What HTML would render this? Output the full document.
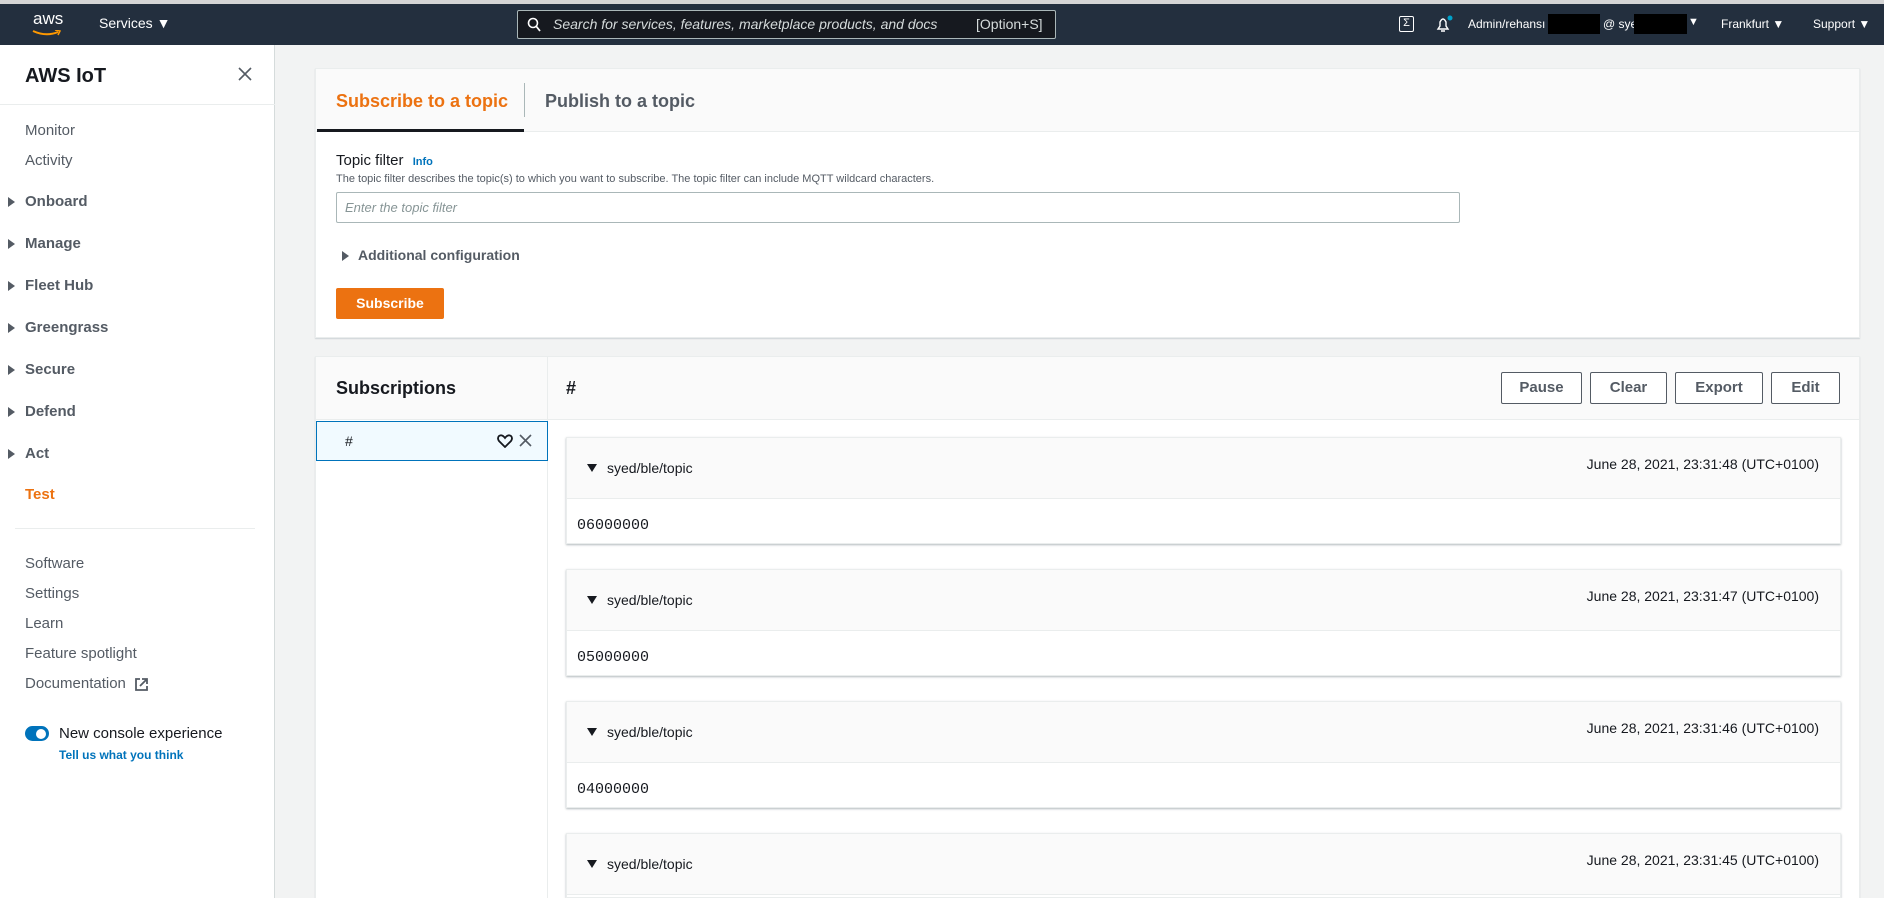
<!DOCTYPE html>
<html style="width:1884px;height:898px;overflow:hidden"><head><meta charset="utf-8"><style>
*{box-sizing:border-box;margin:0;padding:0}
body{width:1884px;height:898px;overflow:hidden;background:#f2f3f3;font-family:"Liberation Sans",sans-serif;color:#16191f;position:relative}
.abs{position:absolute}
.top{left:0;top:0;width:1884px;height:45px;background:#232f3e;border-top:4px solid #d5d5d5}
.tw{color:#fff;font-size:14px;position:absolute;white-space:nowrap}
.side{left:0;top:45px;width:275px;height:853px;background:#fff;border-right:1px solid #d5dbdb}
.si{position:absolute;left:25px;font-size:15px;color:#545b64;white-space:nowrap}
.sb{font-weight:bold;color:#545b64}
.tri{position:absolute;left:8px;width:0;height:0;border-top:5px solid transparent;border-bottom:5px solid transparent;border-left:7px solid #545b64}
.panel{background:#fff;border:1px solid #eaeded;box-shadow:0 1px 1px rgba(0,31,63,.15)}
.btn{position:absolute;top:372px;height:32px;border:1px solid #545b64;border-radius:2px;background:#fff;font-weight:bold;font-size:15px;color:#545b64;text-align:center;line-height:30px}
.card{position:absolute;left:566px;width:1275px;height:107px;background:#fff;border:1px solid #eaeded;box-shadow:0 1px 2px rgba(0,28,36,.3)}
.ch{height:61px;background:#fafafa;border-bottom:1px solid #eaeded;position:relative}
.ch .t{position:absolute;left:20px;top:22px;font-size:14px;color:#16191f}
.ch .t:before{content:"";display:inline-block;border-left:5px solid transparent;border-right:5px solid transparent;border-top:8px solid #16191f;margin-right:10px;vertical-align:1px}
.ch .d{position:absolute;right:21px;top:18px;font-size:14px}
.cb{position:absolute;left:10px;top:79px;font-family:"Liberation Mono",monospace;font-size:15px}
</style></head><body>
<div class="abs top">
  <div class="tw" style="left:33px;top:5px;font-size:17px">aws</div>
  <svg class="abs" style="left:32px;top:26px" width="30" height="8"><path d="M1 1 Q14 7 26 2" stroke="#f90" stroke-width="2" fill="none"/><path d="M23 0 L28 1 L26 5" stroke="#f90" stroke-width="1.5" fill="none"/></svg>
  <div class="tw" style="left:99px;top:11px">Services ▼</div>
  <div class="abs" style="left:517px;top:6px;width:539px;height:29px;border:1px solid #aab7b8;border-radius:2px;background:#16191f"></div>
  <svg class="abs" style="left:527px;top:13px" width="14" height="16"><circle cx="6" cy="6" r="4.5" stroke="#fff" stroke-width="1.6" fill="none"/><path d="M9 9 L13 14" stroke="#fff" stroke-width="1.8"/></svg>
  <div class="tw" style="left:553px;top:12px;font-style:italic;color:#d5dbdb">Search for services, features, marketplace products, and docs</div>
  <div class="tw" style="left:976px;top:12px;color:#d5dbdb">[Option+S]</div>
  <div class="abs" style="left:1399px;top:12px;width:15px;height:16px;border:1.5px solid #fff;border-radius:2px;color:#fff;font-size:11px;line-height:13px;text-align:center">Σ</div>
  <svg class="abs" style="left:1434px;top:10px" width="20" height="20"><path d="M4 15 L6 12 L6 8 Q9 2 12 8 L12 12 L14 15 Z M7 17 L11 17" stroke="#fff" stroke-width="1.4" fill="none"/><circle cx="16" cy="4" r="2.5" fill="#00a1c9"/></svg>
  <div class="tw" style="left:1468px;top:13px;font-size:12px">Admin/rehansı</div>
  <div class="abs" style="left:1548px;top:10px;width:52px;height:20px;background:#000"></div>
  <div class="tw" style="left:1603px;top:13px;font-size:12px">@ sye</div>
  <div class="abs" style="left:1634px;top:10px;width:53px;height:20px;background:#000"></div>
  <div class="tw" style="left:1688px;top:12px;font-size:11px">▼</div>
  <div class="tw" style="left:1721px;top:13px;font-size:12px">Frankfurt ▼</div>
  <div class="tw" style="left:1813px;top:13px;font-size:12px">Support ▼</div>
</div>
<div class="abs side">
  <div class="abs" style="left:25px;top:20px;font-size:20px;font-weight:bold">AWS IoT</div>
  <svg class="abs" style="left:238px;top:22px" width="14" height="14"><path d="M1 1L13 13M13 1L1 13" stroke="#545b64" stroke-width="1.6"/></svg>
  <div class="abs" style="left:0;top:59px;width:275px;border-top:1px solid #eaeded"></div>
</div>
<div class="si" style="top:122px">Monitor</div>
<div class="si" style="top:152px">Activity</div>
<div class="tri" style="top:197px"></div><div class="si sb" style="top:193px">Onboard</div>
<div class="tri" style="top:239px"></div><div class="si sb" style="top:235px">Manage</div>
<div class="tri" style="top:281px"></div><div class="si sb" style="top:277px">Fleet Hub</div>
<div class="tri" style="top:323px"></div><div class="si sb" style="top:319px">Greengrass</div>
<div class="tri" style="top:365px"></div><div class="si sb" style="top:361px">Secure</div>
<div class="tri" style="top:407px"></div><div class="si sb" style="top:403px">Defend</div>
<div class="tri" style="top:449px"></div><div class="si sb" style="top:445px">Act</div>
<div class="si" style="top:486px;color:#ec7211;font-weight:bold">Test</div>
<div class="abs" style="left:15px;top:528px;width:240px;border-top:1px solid #eaeded"></div>
<div class="si" style="top:555px">Software</div>
<div class="si" style="top:585px">Settings</div>
<div class="si" style="top:615px">Learn</div>
<div class="si" style="top:645px">Feature spotlight</div>
<div class="si" style="top:675px">Documentation</div>
<svg class="abs" style="left:134px;top:677px" width="15" height="15"><path d="M6 2H2V13H13V9M8 2H13V7M13 2L6 9" stroke="#545b64" stroke-width="1.8" fill="none"/></svg>
<div class="abs" style="left:25px;top:726px;width:24px;height:15px;border-radius:8px;background:#0073bb"></div>
<div class="abs" style="left:36px;top:729px;width:10px;height:10px;border-radius:5px;background:#fff"></div>
<div class="si" style="left:59px;top:725px;color:#16191f">New console experience</div>
<div class="si" style="left:59px;top:748px;color:#0073bb;font-weight:bold;font-size:12px">Tell us what you think</div>

<div class="abs panel" style="left:315px;top:68px;width:1545px;height:270px">
  <div class="abs" style="left:0;top:0;width:1543px;height:63px;background:#fafafa;border-bottom:1px solid #eaeded"></div>
  <div class="abs" style="left:20px;top:22px;font-size:18px;font-weight:bold;color:#ec7211">Subscribe to a topic</div>
  <div class="abs" style="left:1px;top:60px;width:207px;height:3px;background:#16191f"></div>
  <div class="abs" style="left:208px;top:14px;height:34px;border-left:1px solid #aab7b8"></div>
  <div class="abs" style="left:229px;top:22px;font-size:18px;font-weight:bold;color:#545b64">Publish to a topic</div>
  <div class="abs" style="left:20px;top:83px;font-size:15px">Topic filter <span style="color:#0073bb;font-weight:bold;font-size:11px;margin-left:5px">Info</span></div>
  <div class="abs" style="left:20px;top:104px;font-size:11px;color:#545b64">The topic filter describes the topic(s) to which you want to subscribe. The topic filter can include MQTT wildcard characters.</div>
  <div class="abs" style="left:20px;top:123px;width:1124px;height:31px;border:1px solid #aab7b8;border-radius:2px"></div>
  <div class="abs" style="left:29px;top:131px;font-size:13px;font-style:italic;color:#879596">Enter the topic filter</div>
  <div class="abs" style="left:26px;top:182px;border-top:5px solid transparent;border-bottom:5px solid transparent;border-left:7px solid #545b64"></div>
  <div class="abs" style="left:42px;top:178px;font-size:14px;font-weight:bold;color:#545b64">Additional configuration</div>
  <div class="abs" style="left:20px;top:219px;width:108px;height:31px;background:#ec7211;border-radius:2px;color:#fff;font-weight:bold;font-size:14px;text-align:center;line-height:31px">Subscribe</div>
</div>

<div class="abs panel" style="left:315px;top:356px;width:1545px;height:560px">
  <div class="abs" style="left:0;top:0;width:1543px;height:63px;background:#fafafa;border-bottom:1px solid #eaeded"></div>
  <div class="abs" style="left:231px;top:0;height:560px;border-left:1px solid #eaeded"></div>
  <div class="abs" style="left:20px;top:21px;font-size:18px;font-weight:bold">Subscriptions</div>
  <div class="abs" style="left:250px;top:21px;font-size:18px;font-weight:bold">#</div>
  <div class="abs" style="left:0;top:64px;width:232px;height:40px;background:#f1faff;border:1px solid #0073bb"></div>
  <div class="abs" style="left:29px;top:76px;font-size:14px">#</div>
  <svg class="abs" style="left:181px;top:77px" width="16" height="14"><path d="M8 13 L2 7 Q0 4 2 2 Q5 0 8 4 Q11 0 14 2 Q16 4 14 7 Z" stroke="#16191f" stroke-width="1.8" fill="none"/></svg>
  <svg class="abs" style="left:203px;top:77px" width="13" height="13"><path d="M1 1L12 12M12 1L1 12" stroke="#545b64" stroke-width="1.6"/></svg>
</div>
<div class="btn" style="left:1501px;width:81px">Pause</div>
<div class="btn" style="left:1590px;width:77px">Clear</div>
<div class="btn" style="left:1675px;width:88px">Export</div>
<div class="btn" style="left:1771px;width:69px">Edit</div>

<div class="card" style="top:437px"><div class="ch"><span class="t">syed/ble/topic</span><span class="d">June 28, 2021, 23:31:48 (UTC+0100)</span></div><div class="cb">06000000</div></div>
<div class="card" style="top:569px"><div class="ch"><span class="t">syed/ble/topic</span><span class="d">June 28, 2021, 23:31:47 (UTC+0100)</span></div><div class="cb">05000000</div></div>
<div class="card" style="top:701px"><div class="ch"><span class="t">syed/ble/topic</span><span class="d">June 28, 2021, 23:31:46 (UTC+0100)</span></div><div class="cb">04000000</div></div>
<div class="card" style="top:833px;height:65px"><div class="ch"><span class="t">syed/ble/topic</span><span class="d">June 28, 2021, 23:31:45 (UTC+0100)</span></div></div>
</body></html>
